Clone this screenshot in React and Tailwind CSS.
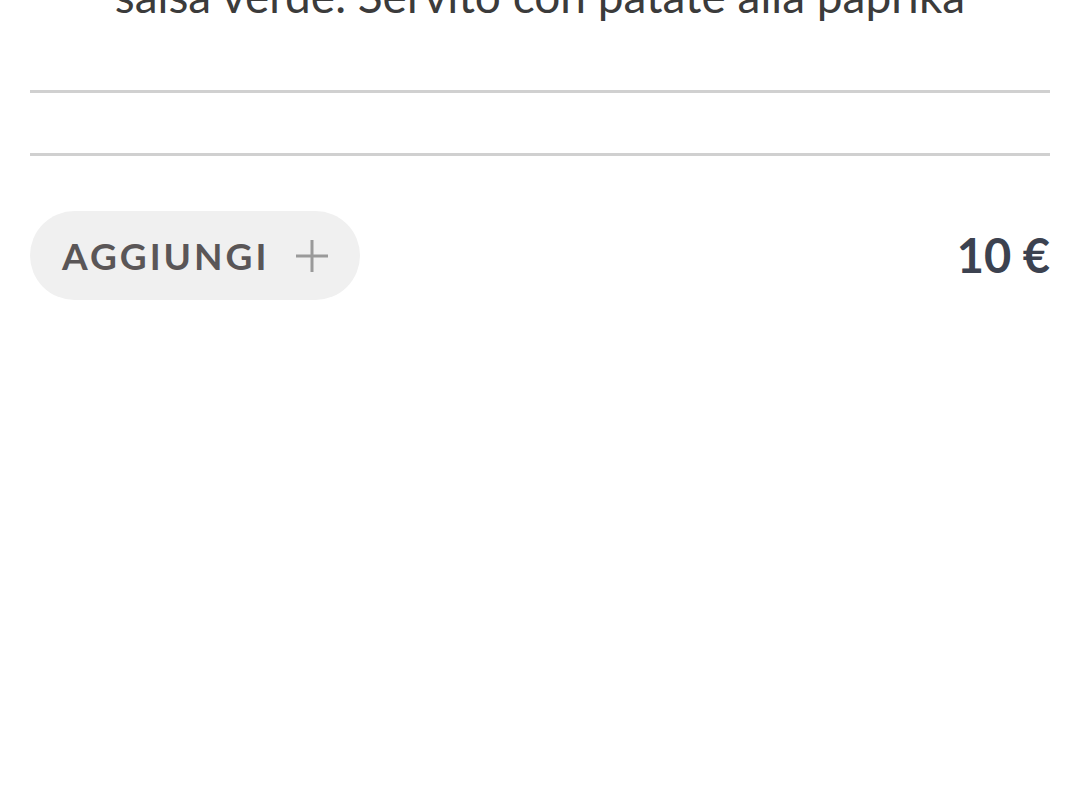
import React from "react";

const App = () => {
  return (
    <div className="w-[1080px] h-[808px] overflow-hidden bg-white font-['Lato','Liberation_Sans',sans-serif]">
      <div className="px-[30px]">
        <p className="-mt-[30px] text-center text-[46px] leading-[52px] text-[#3b3b3b]">
          salsa verde. Servito con patate alla paprika
        </p>

        <div className="mt-[68px] h-[3px] bg-[#d0d0d0]"></div>
        <div className="mt-[60px] h-[3px] bg-[#d0d0d0]"></div>

        <div className="mt-[55px] flex items-center justify-between">
          <button className="h-[89px] w-[330px] flex items-center pl-[32px] rounded-full bg-[#f0f0f0]">
            <span className="text-[37px] font-bold tracking-[3px] text-[#5a5657]">
              AGGIUNGI
            </span>
            <svg
              className="ml-[27px]"
              width="32"
              height="32"
              viewBox="0 0 32 32"
              fill="none"
              stroke="#9a9a9a"
              strokeWidth="3"
            >
              <path d="M16 0v32M0 16h32" />
            </svg>
          </button>
          <span className="text-[47px] font-bold text-[#3c4250]">10 €</span>
        </div>
      </div>
    </div>
  );
};

export default App;
